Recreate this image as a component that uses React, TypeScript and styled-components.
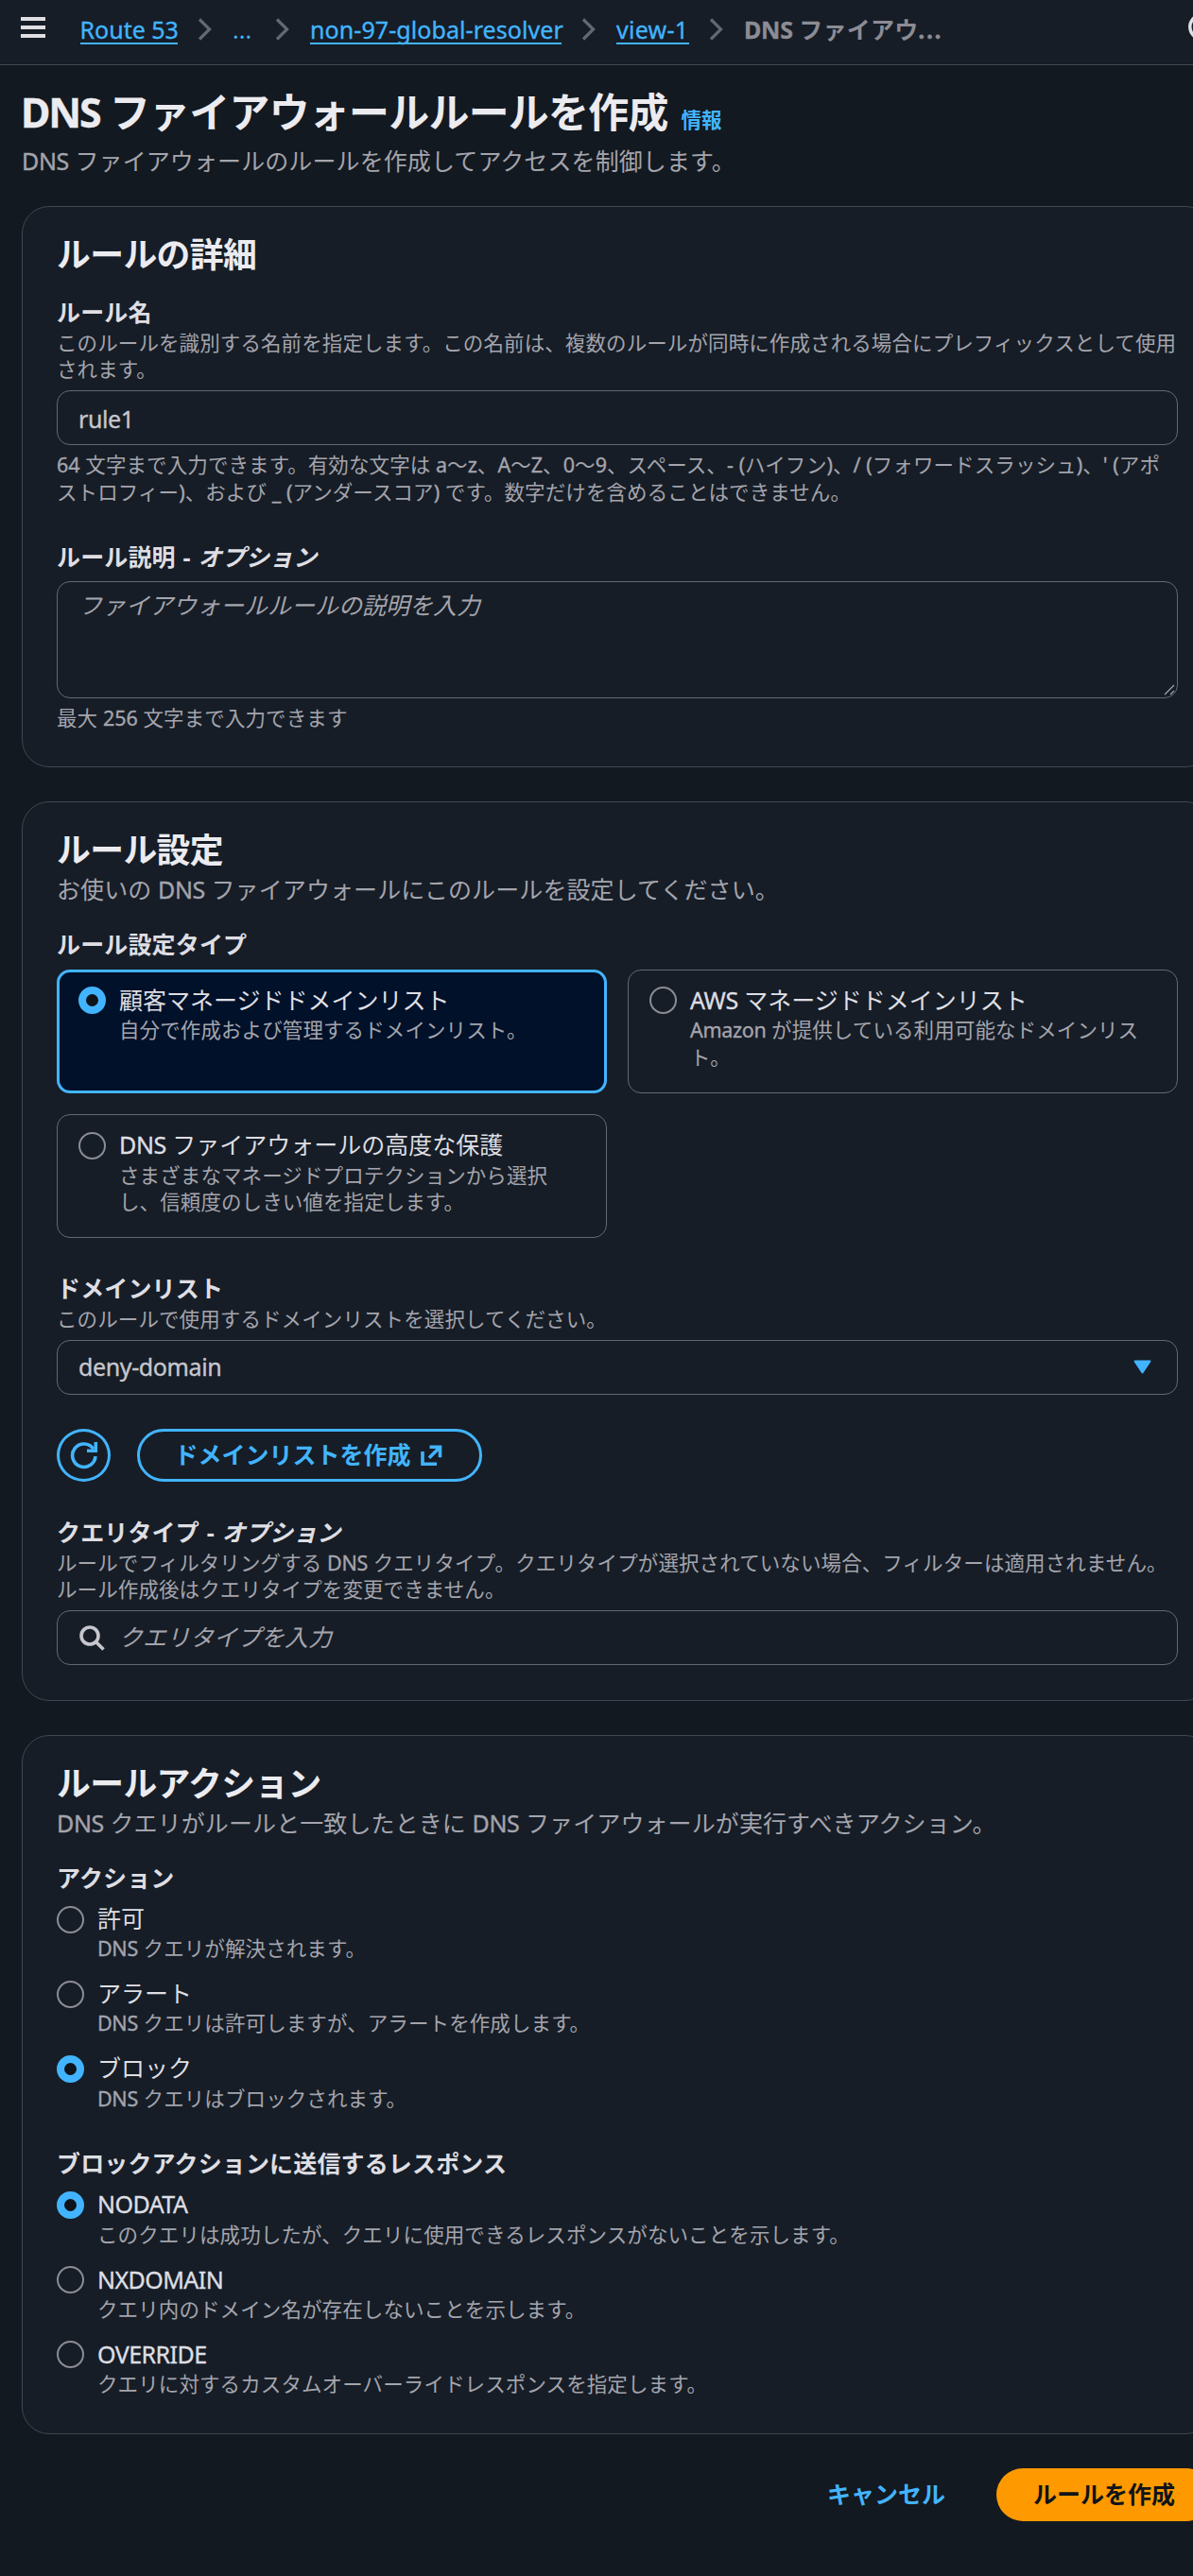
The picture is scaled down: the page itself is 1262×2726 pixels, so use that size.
import React from "react";
import styled, { createGlobalStyle, css } from "styled-components";

const color = {
  page: "#131920",
  surface: "#161d26",
  divider: "#424650",
  control: "#656871",
  heading: "#ebebf0",
  label: "#dedee3",
  input: "#c6c6cd",
  muted: "#a4a4ad",
  dim: "#8c8c94",
  accent: "#42b4ff",
  accentBg: "#001129",
  primary: "#ff9900",
  ink: "#0f141a",
};

const Global = createGlobalStyle`
  * { box-sizing: border-box; }
  body {
    margin: 0;
    background: ${color.page};
    font-family: "Noto Sans", "Noto Sans CJK JP", sans-serif;
    font-size: 25px;
    line-height: 35.7px;
    color: ${color.label};
  }
  input, textarea, button { font: inherit; }
`;

/* Latin runs carry their own tracking and a slightly sturdier stem than the Japanese around them. */
const Latin = styled.span<{ $track: number }>`
  letter-spacing: ${(p) => p.$track}em;
  -webkit-text-stroke: 0.35px currentColor;
`;

function Mixed({ text, track = -0.015 }: { text: string; track?: number }) {
  return (
    <>
      {text.split(/([\x21-\x7e]+)/).map((run, i) =>
        i % 2 ? (
          <Latin key={i} $track={track}>
            {run}
          </Latin>
        ) : (
          run
        ),
      )}
    </>
  );
}

const Page = styled.div`
  width: 1262px;
  height: 2726px;
  overflow: hidden;
`;

const TopBar = styled.header`
  display: flex;
  align-items: center;
  width: 1286px;
  height: 69px;
  padding: 0 0 11px 22px;
  background: ${color.surface};
  border-bottom: 1px solid ${color.divider};
`;

const Crumbs = styled.nav`
  display: flex;
  align-items: center;
  flex: 1;
  margin-left: 36.5px;
  padding-top: 5px;
  white-space: nowrap;
`;

const CrumbLink = styled.a<{ $width: number; $bare?: boolean }>`
  width: ${(p) => p.$width}px;
  height: 31px;
  line-height: 31px;
  color: ${color.accent};
  ${(p) =>
    !p.$bare &&
    css`
      border-bottom: 2px solid ${color.accent};
    `}
`;

const CrumbCurrent = styled.span`
  height: 31px;
  line-height: 31px;
  font-weight: 700;
  letter-spacing: 0.2px;
  color: ${color.dim};
`;

const ChevronSvg = styled.svg`
  flex: none;
  width: 16px;
  height: 24px;
  margin: 0 21.5px 0 20.5px;
`;

const Chevron = () => (
  <ChevronSvg viewBox="0 0 16 24" fill="none" stroke={color.control} strokeWidth="3.2">
    <path d="M2 1.5 12.6 12 2 22.5" />
  </ChevronSvg>
);

const Main = styled.main`
  width: 1260px;
  margin-left: 23px;
  padding-top: 23px;
`;

const TitleRow = styled.div`
  display: flex;
  align-items: baseline;
  gap: 14px;
  height: 60.7px;
`;

const Title = styled.h1`
  margin: 0 0 0 -1px;
  font-size: 42.9px;
  line-height: 53.6px;
  letter-spacing: -0.7px;
  font-weight: 700;
  color: ${color.heading};
`;

const InfoLink = styled.a`
  font-size: 21.5px;
  font-weight: 700;
  color: ${color.accent};
`;

const Lead = styled.p`
  margin: 0;
  letter-spacing: 0.1px;
  color: ${color.muted};
`;

const Card = styled.section<{ $height: number }>`
  height: ${(p) => p.$height}px;
  margin-bottom: 36px;
  padding: 29px 36.5px 0 36px;
  background: ${color.surface};
  border: 1px solid ${color.divider};
  border-radius: 29px;
`;

const CardTitle = styled.h2`
  margin: 0;
  font-size: 35.8px;
  line-height: 43px;
  letter-spacing: -0.6px;
  font-weight: 700;
  color: ${color.heading};
`;

const CardLead = styled.p`
  margin: 3.6px 0 0;
  line-height: 35.7px;
  letter-spacing: 0.1px;
  color: ${color.muted};
`;

const Field = styled.div<{ $top: number }>`
  margin-top: ${(p) => p.$top}px;
`;

const Label = styled.div`
  font-weight: 700;
  line-height: 35.7px;
  letter-spacing: 0.15px;
`;

const OptionalMark = styled.span`
  word-spacing: 1.2px;
`;

const Hint = styled.div`
  font-size: 21.5px;
  line-height: 28.6px;
  letter-spacing: 0.1px;
  color: ${color.muted};
  white-space: pre;
`;

const Note = styled(Hint)`
  margin-top: 7px;
`;

const frame = css`
  display: flex;
  align-items: center;
  width: 100%;
  margin: 7.2px 0 0;
  background: transparent;
  border: 1px solid ${color.control};
  border-radius: 14px;
`;

const TextInput = styled.input`
  ${frame}
  height: 58px;
  padding: 2px 22px 0;
  color: ${color.input};
  letter-spacing: -0.4px;
  -webkit-text-stroke: 0.35px currentColor;
  outline: none;
`;

const AreaWrap = styled.div`
  position: relative;
`;

const TextArea = styled.textarea`
  ${frame}
  height: 124px;
  margin-top: 7px;
  padding: 7px 22px;
  resize: none;
  outline: none;
  &::placeholder {
    color: ${color.muted};
    font-style: italic;
    opacity: 1;
  }
`;

const Grip = styled.svg`
  position: absolute;
  right: 3px;
  bottom: 3px;
  width: 12px;
  height: 12px;
`;

const Select = styled.div`
  ${frame}
  justify-content: space-between;
  height: 58px;
  padding: 0 27px 0 22px;
  color: ${color.input};
`;

const SearchBox = styled.div`
  ${frame}
  gap: 15px;
  height: 58px;
  padding: 0 22px;
  color: ${color.muted};
  input {
    flex: 1;
    padding: 0;
    border: 0;
    background: none;
    outline: none;
  }
  input::placeholder {
    color: ${color.muted};
    font-style: italic;
    opacity: 1;
  }
`;

const Tiles = styled.div`
  display: grid;
  grid-template-columns: 1fr 1fr;
  gap: 22.5px;
  margin-top: 8px;
`;

const Tile = styled.div<{ $on?: boolean }>`
  display: flex;
  height: 131px;
  padding: ${(p) => (p.$on ? "11px 20px" : "13px 22px")};
  border: ${(p) => (p.$on ? `3px solid ${color.accent}` : `1px solid ${color.control}`)};
  border-radius: 14px;
  background: ${(p) => (p.$on ? color.accentBg : "transparent")};
`;

const OptionRow = styled.div`
  display: flex;
  height: 79.2px;
`;

const Dot = styled.span<{ $on?: boolean }>`
  flex: none;
  width: 29px;
  height: 29px;
  margin: 4.5px 14px 0 0;
  border-radius: 50%;
  border: ${(p) => (p.$on ? `8.6px solid ${color.accent}` : `2px solid ${color.dim}`)};
  background: ${(p) => (p.$on ? color.ink : "transparent")};
`;

const OptionTitle = styled.div`
  line-height: 36.2px;
  white-space: nowrap;
`;

type OptionProps = { title: string; hint: string; on?: boolean; track?: number };

const OptionBody = ({ title, hint, on, track }: OptionProps) => (
  <>
    <Dot $on={on} />
    <div>
      <OptionTitle>
        <Mixed text={title} track={track} />
      </OptionTitle>
      <Hint>
        <Mixed text={hint} />
      </Hint>
    </div>
  </>
);

const ButtonRow = styled.div`
  display: flex;
  gap: 28px;
  margin-top: 36px;
`;

const RoundButton = styled.button`
  display: flex;
  align-items: center;
  justify-content: center;
  width: 57px;
  height: 56px;
  padding: 0;
  border: 3px solid ${color.accent};
  border-radius: 50%;
  background: none;
`;

const PillButton = styled.button`
  display: flex;
  align-items: center;
  justify-content: center;
  gap: 9px;
  width: 365px;
  height: 56px;
  padding: 0 3px 0 0;
  border: 3px solid ${color.accent};
  border-radius: 28px;
  background: none;
  font-weight: 700;
  color: ${color.accent};
`;

const Footer = styled.footer`
  display: flex;
  justify-content: flex-end;
  align-items: center;
  gap: 54px;
`;

const CancelButton = styled.button`
  padding: 0;
  border: 0;
  background: none;
  font-weight: 700;
  color: ${color.accent};
`;

const SubmitButton = styled.button`
  width: 229px;
  height: 56px;
  padding: 0 1px 0 0;
  border: 0;
  border-radius: 28px;
  background: ${color.primary};
  font-weight: 700;
  color: ${color.ink};
`;

const actions: OptionProps[] = [
  { title: "許可", hint: "DNS クエリが解決されます。" },
  { title: "アラート", hint: "DNS クエリは許可しますが、アラートを作成します。" },
  { title: "ブロック", hint: "DNS クエリはブロックされます。", on: true },
];

const responses: OptionProps[] = [
  {
    title: "NODATA",
    hint: "このクエリは成功したが、クエリに使用できるレスポンスがないことを示します。",
    on: true,
  },
  { title: "NXDOMAIN", hint: "クエリ内のドメイン名が存在しないことを示します。" },
  { title: "OVERRIDE", hint: "クエリに対するカスタムオーバーライドレスポンスを指定します。" },
];

export default function App() {
  return (
    <Page lang="ja">
      <Global />
      <TopBar>
        <svg width="26" height="22" viewBox="0 0 26 22" fill={color.label}>
          <path d="M0 0h26v4H0zM0 9h26v4H0zM0 18h26v4H0z" />
        </svg>
        <Crumbs>
          <CrumbLink $width={103.5}>
            <Mixed text="Route 53" track={0} />
          </CrumbLink>
          <Chevron />
          <CrumbLink $width={24} $bare>
            ...
          </CrumbLink>
          <Chevron />
          <CrumbLink $width={266}>
            <Mixed text="non-97-global-resolver" track={0.003} />
          </CrumbLink>
          <Chevron />
          <CrumbLink $width={77}>
            <Mixed text="view-1" track={0.01} />
          </CrumbLink>
          <Chevron />
          <CrumbCurrent>
            <Mixed text="DNS ファイアウ" track={-0.01} />
            <Latin $track={0.06}>...</Latin>
          </CrumbCurrent>
        </Crumbs>
        <svg width="29" height="29" viewBox="0 0 29 29" fill="none" stroke={color.label} strokeWidth="3.5">
          <circle cx="14.5" cy="14.5" r="12.7" />
          <path d="M14.5 13v8M14.5 7.5v3.5" />
        </svg>
      </TopBar>

      <Main>
        <TitleRow>
          <Title>
            <Mixed text="DNS ファイアウォールルールを作成" track={-0.05} />
          </Title>
          <InfoLink>情報</InfoLink>
        </TitleRow>
        <Lead>
          <Mixed text="DNS ファイアウォールのルールを作成してアクセスを制御します。" />
        </Lead>

        <Field $top={29.3}>
          <Card $height={594}>
            <CardTitle>ルールの詳細</CardTitle>
            <Field $top={22.2}>
              <Label>ルール名</Label>
              <Hint>
                {"このルールを識別する名前を指定します。この名前は、複数のルールが同時に作成される場合にプレフィックスとして使用\nされます。"}
              </Hint>
              <TextInput defaultValue="rule1" />
              <Note>
                <Mixed text={"64 文字まで入力できます。有効な文字は a〜z、A〜Z、0〜9、スペース、- (ハイフン)、/ (フォワードスラッシュ)、' (アポ\nストロフィー)、および _ (アンダースコア) です。数字だけを含めることはできません。"} track={0} />
              </Note>
            </Field>
            <Field $top={36.8}>
              <Label>
                ルール説明<OptionalMark> - <i>オプション</i></OptionalMark>
              </Label>
              <AreaWrap>
                <TextArea placeholder="ファイアウォールルールの説明を入力" />
                <Grip viewBox="0 0 12 12" stroke={color.muted} strokeWidth="1.2">
                  <path d="M1 11 11 1M7 11l4-4" />
                </Grip>
              </AreaWrap>
              <Note>
                <Mixed text="最大 256 文字まで入力できます" track={0} />
              </Note>
            </Field>
          </Card>
        </Field>

        <Card $height={952}>
          <CardTitle>ルール設定</CardTitle>
          <CardLead>
            <Mixed text="お使いの DNS ファイアウォールにこのルールを設定してください。" />
          </CardLead>
          <Field $top={22.2}>
            <Label>ルール設定タイプ</Label>
            <Tiles>
              <Tile $on>
                <OptionBody on title="顧客マネージドドメインリスト" hint="自分で作成および管理するドメインリスト。" />
              </Tile>
              <Tile>
                <OptionBody
                  title="AWS マネージドドメインリスト"
                  hint={"Amazon が提供している利用可能なドメインリス\nト。"}
                />
              </Tile>
              <Tile>
                <OptionBody
                  title="DNS ファイアウォールの高度な保護"
                  hint={"さまざまなマネージドプロテクションから選択\nし、信頼度のしきい値を指定します。"}
                />
              </Tile>
            </Tiles>
          </Field>
          <Field $top={36}>
            <Label>ドメインリスト</Label>
            <Hint>このルールで使用するドメインリストを選択してください。</Hint>
            <Select>
              <Mixed text="deny-domain" track={-0.015} />
              <svg width="19" height="15" viewBox="0 0 19 15">
                <path d="M1.5 1.5h16L9.5 13.5z" fill={color.accent} stroke={color.accent} strokeWidth="2" strokeLinejoin="round" />
              </svg>
            </Select>
            <ButtonRow>
              <RoundButton aria-label="更新">
                <svg width="30" height="30" viewBox="0 0 30 30" fill="none" stroke={color.accent} strokeWidth="3.6">
                  <path d="M27 16.2A12.2 12.2 0 1 1 24.8 8.2" />
                  <path d="M27.3 1v9.3H18" />
                </svg>
              </RoundButton>
              <PillButton>
                ドメインリストを作成
                <svg width="24" height="24" viewBox="0 0 24 24" fill="none" stroke={color.accent} strokeWidth="3.6">
                  <path d="M10.5 3.2h11v11M21 3.7 10 14.7" />
                  <path d="M3 8v13.3h15" />
                </svg>
              </PillButton>
            </ButtonRow>
          </Field>
          <Field $top={36.3}>
            <Label>
              クエリタイプ<OptionalMark> - <i>オプション</i></OptionalMark>
            </Label>
            <Hint>
              <Mixed text={"ルールでフィルタリングする DNS クエリタイプ。クエリタイプが選択されていない場合、フィルターは適用されません。\nルール作成後はクエリタイプを変更できません。"} />
            </Hint>
            <SearchBox>
              <svg width="28" height="28" viewBox="0 0 28 28" fill="none" stroke={color.input} strokeWidth="3.6">
                <circle cx="12" cy="12" r="9" />
                <path d="M18.5 18.5 26.5 26.5" />
              </svg>
              <input placeholder="クエリタイプを入力" />
            </SearchBox>
          </Field>
        </Card>

        <Card $height={740}>
          <CardTitle>ルールアクション</CardTitle>
          <CardLead>
            <Mixed text="DNS クエリがルールと一致したときに DNS ファイアウォールが実行すべきアクション。" />
          </CardLead>
          <Field $top={22}>
            <Label>アクション</Label>
            <Field $top={6.4}>
              {actions.map((o) => (
                <OptionRow key={o.title}>
                  <OptionBody {...o} />
                </OptionRow>
              ))}
            </Field>
          </Field>
          <Field $top={22}>
            <Label>ブロックアクションに送信するレスポンス</Label>
            <Field $top={7}>
              {responses.map((o) => (
                <OptionRow key={o.title}>
                  <OptionBody {...o} track={-0.022} />
                </OptionRow>
              ))}
            </Field>
          </Field>
        </Card>

        <Footer>
          <CancelButton>キャンセル</CancelButton>
          <SubmitButton>ルールを作成</SubmitButton>
        </Footer>
      </Main>
    </Page>
  );
}
